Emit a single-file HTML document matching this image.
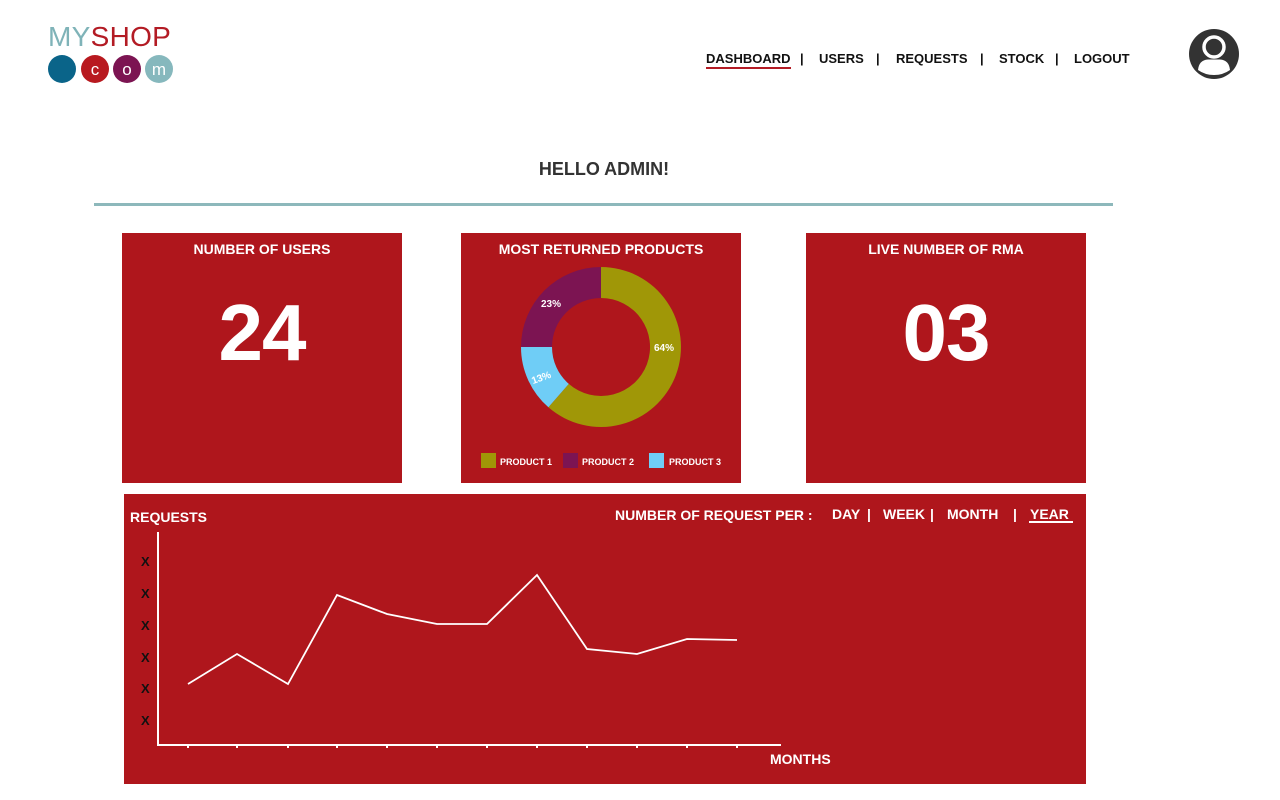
<!DOCTYPE html>
<html><head><meta charset="utf-8"><style>
*{margin:0;padding:0;box-sizing:border-box}
body{width:1280px;height:800px;background:#fff;font-family:"Liberation Sans",sans-serif;position:relative;overflow:hidden}
.a{position:absolute}
.b{font-weight:bold}
.card{position:absolute;background:#af161c;color:#fff}
nav span{position:absolute;top:51px;font-size:13px;font-weight:bold;color:#111}
</style></head><body>
<div class="a" style="left:48px;top:21px;font-size:28px;letter-spacing:0.3px;line-height:32px"><span style="color:#7fb3b8">MY</span><span style="color:#b31b24">SHOP</span></div>
<svg class="a" style="left:46px;top:54px" width="130" height="30">
<circle cx="16" cy="15" r="14" fill="#0a6489"/>
<circle cx="49" cy="15" r="14" fill="#b8191f"/>
<circle cx="81" cy="15" r="14" fill="#7c1452"/>
<circle cx="113" cy="15" r="14" fill="#86b8bd"/>
<text x="49" y="21" fill="#fff" font-size="17" text-anchor="middle" font-family="Liberation Sans">c</text>
<text x="81" y="21" fill="#fff" font-size="17" text-anchor="middle" font-family="Liberation Sans">o</text>
<text x="113" y="21" fill="#fff" font-size="17" text-anchor="middle" font-family="Liberation Sans">m</text>
</svg>
<nav>
<span style="left:706px">DASHBOARD</span>
<div class="a" style="left:706px;top:67px;width:85px;height:2px;background:#b31b24"></div>
<span style="left:800px">|</span>
<span style="left:819px">USERS</span>
<span style="left:876px">|</span>
<span style="left:896px">REQUESTS</span>
<span style="left:980px">|</span>
<span style="left:999px">STOCK</span>
<span style="left:1055px">|</span>
<span style="left:1074px">LOGOUT</span>
</nav>
<svg class="a" style="left:1189px;top:29px" width="50" height="50">
<circle cx="25" cy="25" r="25" fill="#333"/>
<circle cx="25" cy="18" r="10" fill="none" stroke="#fff" stroke-width="3.5"/>
<path d="M9 41 Q10 31 19 30.5 L31 30.5 Q40 31 41 41 Q34 46 25 46 Q16 46 9 41Z" fill="#fff"/>
</svg>
<div class="a b" style="left:0;width:1208px;top:159px;text-align:center;font-size:18px;color:#333">HELLO ADMIN!</div>
<div class="a" style="left:94px;top:203px;width:1019px;height:3px;background:#8db8bb"></div>

<div class="card" style="left:122px;top:233px;width:280px;height:250px">
<div class="b" style="text-align:center;margin-top:8px;font-size:14px">NUMBER OF USERS</div>
<div class="b" style="text-align:center;margin-top:36px;font-size:80px;line-height:80px;letter-spacing:-1px">24</div>
</div>
<div class="card" style="left:461px;top:233px;width:280px;height:250px">
<div class="b" style="text-align:center;margin-top:8px;font-size:14px">MOST RETURNED PRODUCTS</div>
<svg class="a" style="left:0;top:0" width="280" height="250">
<g transform="translate(140,114)">
<path d="M0 -80 A80 80 0 1 1 -52.6 60.3 L-32.2 36.9 A49 49 0 1 0 0 -49Z" fill="#a09707"/>
<path d="M-52.6 60.3 A80 80 0 0 1 -80 0 L-49 0 A49 49 0 0 0 -32.2 36.9Z" fill="#6fcdf6"/>
<path d="M-80 0 A80 80 0 0 1 0 -80 L0 -49 A49 49 0 0 0 -49 0Z" fill="#7c1452"/>
<g fill="#fff" font-size="10" font-weight="bold" font-family="Liberation Sans">
<text x="-60" y="-40">23%</text>
<text x="53" y="4">64%</text>
<text x="-70" y="34" transform="rotate(-20 -60 30)">13%</text>
</g></g>
<g font-size="9" font-weight="bold" fill="#fff" font-family="Liberation Sans">
<rect x="20" y="220" width="15" height="15" fill="#a09707"/><text x="39" y="232">PRODUCT 1</text>
<rect x="102" y="220" width="15" height="15" fill="#7c1452"/><text x="121" y="232">PRODUCT 2</text>
<rect x="188" y="220" width="15" height="15" fill="#6fcdf6"/><text x="208" y="232">PRODUCT 3</text>
</g></svg>
</div>
<div class="card" style="left:806px;top:233px;width:280px;height:250px">
<div class="b" style="text-align:center;margin-top:8px;font-size:14px">LIVE NUMBER OF RMA</div>
<div class="b" style="text-align:center;margin-top:36px;font-size:80px;line-height:80px;letter-spacing:-1px">03</div>
</div>

<div class="card" style="left:124px;top:494px;width:962px;height:290px">
<svg class="a" style="left:0;top:0" width="962" height="290" font-family="Liberation Sans" font-weight="bold">
<g fill="#fff" font-size="14">
<text x="6" y="28">REQUESTS</text>
<text x="491" y="26">NUMBER OF REQUEST PER :</text>
<text x="708" y="25">DAY</text><text x="743" y="25">|</text>
<text x="759" y="25">WEEK</text><text x="806" y="25">|</text>
<text x="823" y="25">MONTH</text><text x="889" y="25">|</text>
<text x="906" y="25">YEAR</text>
<text x="646" y="270">MONTHS</text>
</g>
<rect x="905" y="27" width="44" height="2" fill="#fff"/>
<g fill="#111" font-size="13"><text x="17" y="72">X</text><text x="17" y="104">X</text><text x="17" y="136">X</text><text x="17" y="168">X</text><text x="17" y="199">X</text><text x="17" y="231">X</text></g>
<g stroke="#fff" fill="none" stroke-width="2">
<path d="M34 38 V251 H657"/>
<path d="M64 251v3M113 251v3M164 251v3M213 251v3M263 251v3M313 251v3M363 251v3M413 251v3M463 251v3M513 251v3M563 251v3M613 251v3"/>
<polyline stroke-width="1.8" points="64,190 113,160 164,190 213,101 263,120 313,130 363,130 413,81 463,155 513,160 563,145 613,146"/>
</g></svg>
</div>
</body></html>
